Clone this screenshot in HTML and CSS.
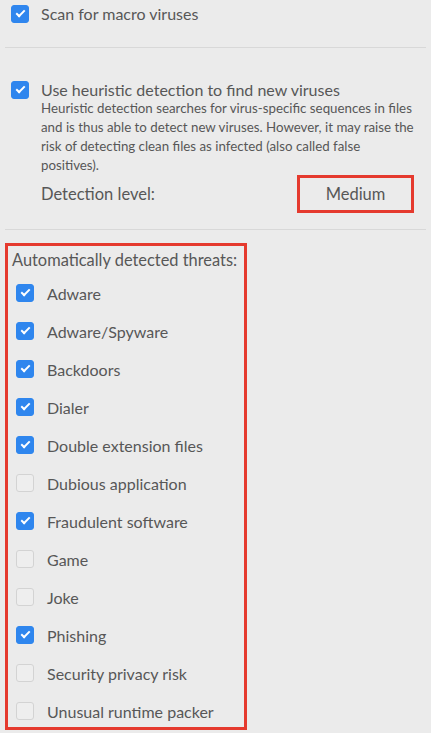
FILE: index.html
```html
<!DOCTYPE html>
<html lang="en">
<head>
    <meta charset="UTF-8">
    <meta name="viewport" content="width=device-width, initial-scale=1.0">
    <title>Scanner settings</title>
    <link rel="stylesheet" href="styles.css">
</head>
<body>
    <div class="settings">
        <!-- Macro viruses -->
        <div class="section macro-section">
            <div class="option">
                <span class="checkbox checked"></span>
                <span class="option-label">Scan for macro viruses</span>
            </div>
        </div>

        <div class="divider"></div>

        <!-- Heuristic detection -->
        <div class="section heuristic-section">
            <div class="option">
                <span class="checkbox checked"></span>
                <span class="option-label">Use heuristic detection to find new viruses</span>
            </div>
            <div class="description">
                Heuristic detection searches for virus-specific sequences in files and is thus able to detect new viruses. However, it may raise the risk of detecting clean files as infected (also called false positives).
            </div>
            <div class="detection-row">
                <span class="detection-label">Detection level:</span>
                <span class="detection-value">Medium</span>
            </div>
        </div>

        <div class="divider"></div>

        <!-- Threat categories -->
        <div class="threats">
            <div class="threats-title">Automatically detected threats:</div>
            <div class="threat-list">
                <div class="threat"><span class="checkbox checked"></span><span>Adware</span></div>
                <div class="threat"><span class="checkbox checked"></span><span>Adware/Spyware</span></div>
                <div class="threat"><span class="checkbox checked"></span><span>Backdoors</span></div>
                <div class="threat"><span class="checkbox checked"></span><span>Dialer</span></div>
                <div class="threat"><span class="checkbox checked"></span><span>Double extension files</span></div>
                <div class="threat"><span class="checkbox"></span><span>Dubious application</span></div>
                <div class="threat"><span class="checkbox checked"></span><span>Fraudulent software</span></div>
                <div class="threat"><span class="checkbox"></span><span>Game</span></div>
                <div class="threat"><span class="checkbox"></span><span>Joke</span></div>
                <div class="threat"><span class="checkbox checked"></span><span>Phishing</span></div>
                <div class="threat"><span class="checkbox"></span><span>Security privacy risk</span></div>
                <div class="threat"><span class="checkbox"></span><span>Unusual runtime packer</span></div>
            </div>
        </div>
    </div>
</body>
</html>
```

FILE: styles.css
```css
body {
    margin: 0;
    padding: 0;
    background-color: #ebebeb;
    color: #575757;
    font-family: 'Lato', 'Open Sans', sans-serif;
    font-size: 16px;
    overflow: hidden;
}

.settings {
    width: 431px;
}

/* Sections */
.section {
    padding-left: 11px;
}

.macro-section {
    height: 47px;
}

.heuristic-section {
    padding-top: 32px;
}

.option {
    display: flex;
    align-items: center;
    gap: 12px;
    height: 27px;
    line-height: 20px;
}

.heuristic-section .option {
    height: 20px;
}

.divider {
    height: 1px;
    margin: 0 5px;
    background-color: #d8d8d8;
}

/* Checkboxes */
.checkbox {
    flex: 0 0 auto;
    width: 18px;
    height: 18px;
    box-sizing: border-box;
    border: 1px solid #d3d3d3;
    border-radius: 3px;
    background-color: #eeeeee;
    position: relative;
}

.checkbox.checked {
    border-color: #2f86ee;
    background-color: #2f86ee;
}

.checkbox.checked::after {
    content: '';
    position: absolute;
    left: 4px;
    top: 4px;
    width: 7px;
    height: 3px;
    border-left: 2.5px solid #ffffff;
    border-bottom: 2.5px solid #ffffff;
    transform: rotate(-45deg);
}

/* Heuristic description */
.description {
    width: 376px;
    margin-left: 30px;
    margin-top: -1px;
    font-size: 13.3px;
    line-height: 19px;
}

.detection-row {
    display: flex;
    align-items: center;
    justify-content: space-between;
    height: 38px;
    margin-left: 30px;
    margin-right: 17px;
    margin-bottom: 16px;
    font-size: 16.5px;
}

.detection-value {
    display: flex;
    align-items: center;
    justify-content: center;
    width: 117px;
    height: 38px;
    box-sizing: border-box;
    border: 3px solid #e53a2e;
}

/* Threats box */
.threats {
    width: 242px;
    margin: 13px 0 0 5px;
    box-sizing: border-box;
    border: 3px solid #e53a2e;
    padding: 4px 0 6px 4px;
}

.threats-title {
    line-height: 20px;
    font-size: 16.4px;
}

.threat-list {
    display: flex;
    flex-direction: column;
    gap: 18px;
    margin-top: 13px;
    padding-left: 4px;
}

.threat {
    display: flex;
    align-items: center;
    gap: 13px;
    height: 20px;
}
```
